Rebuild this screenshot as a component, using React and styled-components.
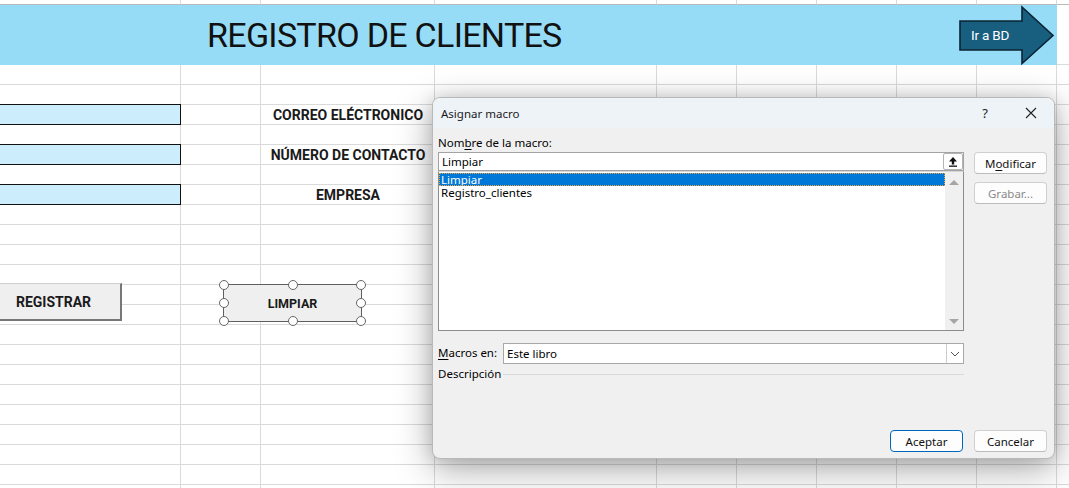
import React from 'react';
import styled, { createGlobalStyle } from 'styled-components';

const GlobalStyle = createGlobalStyle`
  html, body {
    margin: 0;
    padding: 0;
    background: #fff;
    overflow: hidden;
  }
  body {
    font-family: Roboto, "Liberation Sans", sans-serif;
  }
`;

const COLS = '181px 80px 174px 222px 80px 80px 80px 80px 80px 80px';
const ROWS = '5px 60px repeat(22, 20px)';
const ROW_COUNT = 24;
const COL_COUNT = 10;

const Page = styled.div`
  position: relative;
  width: 1069px;
  height: 488px;
  overflow: hidden;
`;

const Sheet = styled.div`
  display: grid;
  width: 1069px;
  height: 488px;
  overflow: hidden;
`;

const Layer = styled.div`
  grid-area: 1 / 1;
  display: grid;
  grid-template-columns: ${COLS};
  grid-template-rows: ${ROWS};
`;

const Cell = styled.div`
  box-sizing: border-box;
  border-right: 1px solid #dadada;
  border-bottom: 1px solid ${(p) => (p.$top ? '#b9b9b9' : '#dadada')};
`;

const Place = styled.div`
  grid-row: ${(p) => p.$row};
  grid-column: ${(p) => p.$col};
  min-width: 0;
`;

const HeaderBand = styled(Place)`
  background: #97dcf7;
  display: flex;
  align-items: center;
  padding-left: 207px;
  padding-right: 2px;
`;

const Title = styled.h1`
  margin: 0;
  font-family: Roboto, "Liberation Sans", sans-serif;
  font-weight: 400;
  font-size: 34px;
  letter-spacing: -0.7px;
  color: #111;
`;

const ArrowShape = styled.svg`
  margin-left: auto;
  display: block;
`;

const FieldFill = styled(Place)`
  margin-top: -1px;
  background: #ccedfb;
  border: 1px solid #111;
  border-left: none;
`;

const FieldLabel = styled(Place)`
  font-family: Roboto, "Liberation Sans", sans-serif;
  font-weight: 700;
  font-size: 14px;
  line-height: 20px;
  color: #1a1a1a;
  text-align: center;
`;

const MacroButton = styled(Place)`
  align-self: start;
  box-sizing: border-box;
  position: relative;
  display: flex;
  align-items: center;
  justify-content: center;
  font-family: Roboto, "Liberation Sans", sans-serif;
  font-weight: 700;
  font-size: ${(p) => p.$fs}px;
  color: #1a1a1a;
  background: #efefef;
  width: ${(p) => p.$w}px;
  height: ${(p) => p.$h}px;
  margin-left: ${(p) => p.$ml}px;
  margin-top: ${(p) => p.$mt}px;
  border: ${(p) => (p.$selected ? '1px solid #5f5f5f' : '1px solid #cfcfcf')};
  border-right: ${(p) => (p.$selected ? '1px solid #5f5f5f' : '2px solid #777')};
  border-bottom: ${(p) => (p.$selected ? '1px solid #5f5f5f' : '2px solid #777')};
`;

const Handle = styled.span`
  position: absolute;
  width: 10px;
  height: 10px;
  box-sizing: border-box;
  border: 1.7px solid #666;
  border-radius: 50%;
  background: #fff;
  left: ${(p) => p.$x};
  top: ${(p) => p.$y};
  transform: translate(-50%, -50%);
`;

/* dialog */

const Dialog = styled.div`
  position: absolute;
  left: 432px;
  top: 97px;
  width: 623px;
  height: 362px;
  box-sizing: border-box;
  border: 1px solid #b9b9b9;
  border-radius: 8px;
  background: #f0f0f0;
  box-shadow: 0 10px 36px rgba(0, 0, 0, 0.34), 0 0 16px rgba(0, 0, 0, 0.12);
  display: flex;
  flex-direction: column;
  overflow: hidden;
  font-family: "Noto Sans", "Open Sans", sans-serif;
  font-size: 11.5px;
  color: #000;
`;

const TitleBar = styled.div`
  flex: none;
  height: 30px;
  display: flex;
  align-items: center;
  background: #eef3f8;
  padding-left: 8px;
  font-size: 11.5px;
  color: #1a1a1a;
`;

const TitleText = styled.span`
  flex: 1;
`;

const TitleButton = styled.div`
  width: 46px;
  height: 30px;
  display: flex;
  align-items: center;
  justify-content: center;
  font-size: 13px;
  color: #222;
`;

const Body = styled.div`
  flex: 1;
  display: flex;
  flex-direction: column;
  padding: 7px 7px 6px 5px;
`;

const TopArea = styled.div`
  display: grid;
  grid-template-columns: 526px 73px;
  column-gap: 10px;
`;

const MainColumn = styled.div`
  display: flex;
  flex-direction: column;
`;

const SideColumn = styled.div`
  display: flex;
  flex-direction: column;
  gap: 8px;
  padding-top: 17px;
`;

const Label = styled.div`
  line-height: 16px;
  height: 16px;
  margin-bottom: 1px;
  white-space: nowrap;
  width: ${(p) => (p.$w ? `${p.$w}px` : 'auto')};
  flex: none;
`;

const U = styled.span`
  text-decoration: underline;
  text-underline-offset: 2px;
`;

const NameInput = styled.div`
  box-sizing: border-box;
  height: 19px;
  display: flex;
  align-items: center;
  background: #fff;
  border: 1px solid #a3a3a3;
  padding-left: 3px;
`;

const InputText = styled.span`
  flex: 1;
  line-height: 17px;
`;

const CollapseButton = styled.div`
  box-sizing: border-box;
  width: 20px;
  height: 17px;
  display: flex;
  align-items: center;
  justify-content: center;
  border: 1px solid #b4b4b4;
  border-radius: 2px;
  background: #fff;
`;

const ListBox = styled.div`
  box-sizing: border-box;
  height: 160px;
  display: flex;
  background: #fff;
  border: 1px solid #8c8c8c;
  border-top-color: #d6d6d6;
`;

const ListItems = styled.div`
  flex: 1;
  padding-top: 1px;
`;

const ListItem = styled.div`
  height: 13px;
  line-height: 13px;
  padding-left: 2px;
  box-sizing: border-box;
  background: ${(p) => (p.$selected ? '#0078d7' : 'transparent')};
  color: ${(p) => (p.$selected ? '#fff' : '#000')};
  outline: ${(p) => (p.$selected ? '1px dotted #f3a33a' : 'none')};
  outline-offset: -1px;
`;

const ScrollBar = styled.div`
  width: 18px;
  background: #f0f0f0;
  display: flex;
  flex-direction: column;
  align-items: center;
  justify-content: space-between;
  padding: 8px 0 6px;
`;

const Triangle = styled.span`
  width: 0;
  height: 0;
  border-left: 5px solid transparent;
  border-right: 5px solid transparent;
  ${(p) => (p.$down ? 'border-top: 5px solid #a6a6a6;' : 'border-bottom: 5px solid #a6a6a6;')}
`;

const Row = styled.div`
  display: flex;
  align-items: center;
  margin-top: ${(p) => p.$mt}px;
`;

const Select = styled.div`
  box-sizing: border-box;
  flex: 1;
  height: 21px;
  display: flex;
  align-items: center;
  background: #fff;
  border: 1px solid #a8a8a8;
  padding-left: 3px;
`;

const Chevron = styled.div`
  width: 16px;
  align-self: stretch;
  display: flex;
  align-items: center;
  justify-content: center;
  border-left: 1px solid #cdcdcd;
`;

const Rule = styled.div`
  flex: 1;
  height: 1px;
  background: #d9d9d9;
`;

const Footer = styled.div`
  margin-top: auto;
  display: flex;
  justify-content: flex-end;
  gap: 11px;
`;

const DlgButton = styled.div`
  box-sizing: border-box;
  width: 73px;
  height: 22px;
  display: flex;
  align-items: center;
  justify-content: center;
  background: #fdfdfd;
  border: 1px solid ${(p) => (p.$primary ? '#0067c0' : '#d0d0d0')};
  border-bottom-color: ${(p) => (p.$primary ? '#0067c0' : '#bcbcbc')};
  border-radius: 4px;
  color: ${(p) => (p.$disabled ? '#8a8a8a' : '#111')};
`;

const handles = [
  ['0%', '0%'], ['50%', '0%'], ['100%', '0%'],
  ['0%', '50%'], ['100%', '50%'],
  ['0%', '100%'], ['50%', '100%'], ['100%', '100%'],
];

const fields = [
  { row: 5, label: 'CORREO ELÉCTRONICO' },
  { row: 7, label: 'NÚMERO DE CONTACTO' },
  { row: 9, label: 'EMPRESA' },
];

const App = () => {
  const cells = [];
  for (let r = 0; r < ROW_COUNT; r++) {
    for (let c = 0; c < COL_COUNT; c++) {
      cells.push(<Cell key={`${r}-${c}`} $top={r === 0} />);
    }
  }

  return (
    <Page>
      <GlobalStyle />
      <Sheet>
        <Layer>{cells}</Layer>
        <Layer>
          <HeaderBand $row={2} $col="1 / 10">
            <Title>REGISTRO DE CLIENTES</Title>
            <ArrowShape width="96" height="60" viewBox="0 0 96 60">
              <polygon
                points="1,16 63,16 63,2 94,30.5 63,58.5 63,45 1,45"
                fill="#185e7f"
                stroke="#0b2432"
                strokeWidth="1.6"
              />
              <text x="12" y="35" fill="#fff" fontFamily="Roboto, sans-serif" fontSize="13.5" letterSpacing="-0.2">
                Ir a BD
              </text>
            </ArrowShape>
          </HeaderBand>

          {fields.map((f) => (
            <React.Fragment key={f.row}>
              <FieldFill $row={f.row} $col={1} />
              <FieldLabel $row={f.row} $col={3}>{f.label}</FieldLabel>
            </React.Fragment>
          ))}

          <MacroButton $row="14 / span 2" $col={1} $w={136} $h={38} $ml={-14} $mt={-2} $fs={14}>
            REGISTRAR
          </MacroButton>
          <MacroButton $row="14 / span 2" $col="2 / span 2" $w={139} $h={38} $ml={42} $mt={-1} $fs={12.5} $selected>
            LIMPIAR
            {handles.map(([x, y]) => (
              <Handle key={`${x}${y}`} $x={x} $y={y} />
            ))}
          </MacroButton>
        </Layer>
      </Sheet>

      <Dialog>
        <TitleBar>
          <TitleText>Asignar macro</TitleText>
          <TitleButton>?</TitleButton>
          <TitleButton>
            <svg width="12" height="12" viewBox="0 0 12 12">
              <path d="M1 1 L11 11 M11 1 L1 11" stroke="#222" strokeWidth="1.1" />
            </svg>
          </TitleButton>
        </TitleBar>
        <Body>
          <TopArea>
            <MainColumn>
              <Label>Nom<U>b</U>re de la macro:</Label>
              <NameInput>
                <InputText>Limpiar</InputText>
                <CollapseButton>
                  <svg width="10" height="11" viewBox="0 0 10 11">
                    <path d="M5 1 L1 5.5 H3.8 V8.5 H6.2 V5.5 H9 Z" fill="#111" />
                    <rect x="1" y="9.5" width="8" height="1.3" fill="#111" />
                  </svg>
                </CollapseButton>
              </NameInput>
              <ListBox>
                <ListItems>
                  <ListItem $selected>Limpiar</ListItem>
                  <ListItem>Registro_clientes</ListItem>
                </ListItems>
                <ScrollBar>
                  <Triangle />
                  <Triangle $down />
                </ScrollBar>
              </ListBox>
              <Row $mt={12}>
                <Label $w={65}><U>M</U>acros en:</Label>
                <Select>
                  <InputText>Este libro</InputText>
                  <Chevron>
                    <svg width="10" height="6" viewBox="0 0 10 6">
                      <path d="M1 1 L5 5 L9 1" fill="none" stroke="#555" strokeWidth="1" />
                    </svg>
                  </Chevron>
                </Select>
              </Row>
              <Row $mt={2}>
                <Label $w={65}>Descripción</Label>
                <Rule />
              </Row>
            </MainColumn>
            <SideColumn>
              <DlgButton>M<U>o</U>dificar</DlgButton>
              <DlgButton $disabled>Grabar...</DlgButton>
            </SideColumn>
          </TopArea>
          <Footer>
            <DlgButton $primary>Aceptar</DlgButton>
            <DlgButton>Cancelar</DlgButton>
          </Footer>
        </Body>
      </Dialog>
    </Page>
  );
};

export default App;
